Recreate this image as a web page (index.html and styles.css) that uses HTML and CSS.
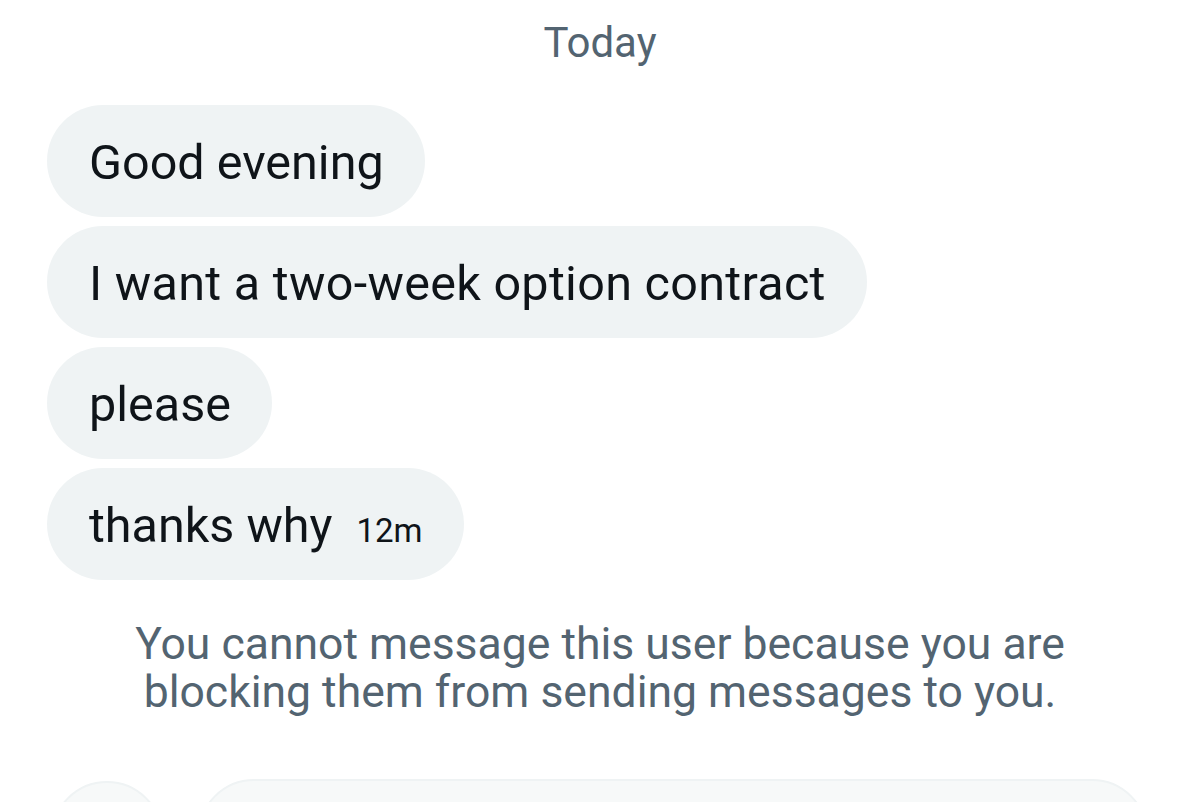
FILE: index.html
```html
<!DOCTYPE html>
<html lang="en">
<head>
<meta charset="utf-8">
<title>Messages</title>
<link rel="stylesheet" href="styles.css">
</head>
<body>
<div class="page">
  <div class="date">Today</div>
  <div class="messages">
    <div class="bubble">Good evening</div>
    <div class="bubble wide">I want a two-week option contract</div>
    <div class="bubble">please</div>
    <div class="bubble">thanks why<span class="time">12m</span></div>
  </div>
  <p class="notice">You cannot message this user because you are<br>blocking them from sending messages to you.</p>
  <div class="composer">
    <div class="avatar"></div>
    <div class="input"></div>
  </div>
</div>
</body>
</html>
```
FILE: styles.css
```css
html, body {
  margin: 0;
  padding: 0;
  background: #ffffff;
}
.page {
  width: 1200px;
  height: 802px;
  overflow: hidden;
  font-family: Roboto, "Liberation Sans", sans-serif;
  color: #0f1419;
}
.date {
  text-align: center;
  color: #536471;
  font-size: 42px;
  line-height: 44px;
  padding-top: 21px;
}
.messages {
  display: flex;
  flex-direction: column;
  align-items: flex-start;
  gap: 9px;
  padding-left: 47px;
  margin-top: 40px;
}
.bubble {
  box-sizing: border-box;
  height: 112px;
  padding: 2px 41px 0 42px;
  display: flex;
  align-items: center;
  background: #eff3f4;
  border-radius: 56px;
  font-size: 48.5px;
  white-space: nowrap;
}
.bubble.wide {
  letter-spacing: 0.3px;
}
.time {
  font-size: 33px;
  margin-left: 24px;
  padding-top: 10px;
}
.notice {
  margin: 40px 0 0;
  text-align: center;
  color: #536471;
  font-size: 44.5px;
  line-height: 48px;
}
.composer {
  display: flex;
  align-items: flex-start;
  gap: 35px;
  padding-left: 51px;
  padding-right: 52px;
  margin-top: 63px;
}
.avatar {
  width: 112px;
  height: 112px;
  flex: none;
  margin-top: 2px;
  border-radius: 50%;
  border: 2px solid #eff3f4;
  background: #f7f9f9;
  box-sizing: border-box;
}
.input {
  flex: 1;
  height: 112px;
  border-radius: 56px;
  border: 2px solid #eff3f4;
  background: #f7f9f9;
  box-sizing: border-box;
}
```
